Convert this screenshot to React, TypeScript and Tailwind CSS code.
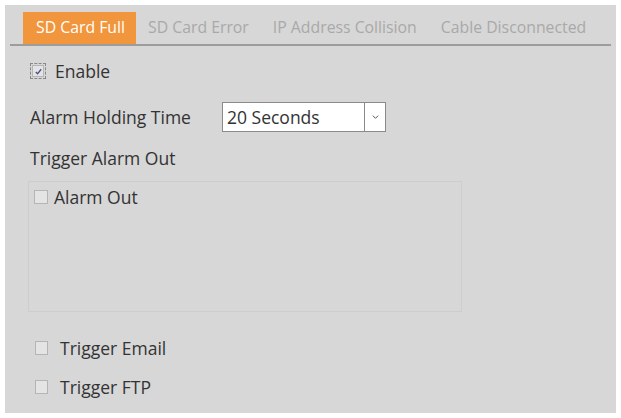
const TABS = ["SD Card Full", "SD Card Error", "IP Address Collision", "Cable Disconnected"];

const Box = ({ checked = false, className = "" }: { checked?: boolean; className?: string }) => (
    <span
        className={`inline-flex items-center justify-center border border-[#b5b5b5] bg-[#e4e4e4] ${className}`}
    >
        {checked && (
            <svg viewBox="0 0 10 10" className="w-[9px] h-[9px]">
                <path d="M2 5.5 L4 7.5 L8 2.5" fill="none" stroke="#4a4f8a" strokeWidth="1.4" />
            </svg>
        )}
    </span>
);

export default function App() {
    return (
        <div className="w-[621px] h-[418px] bg-white p-[5px] font-['Open_Sans',sans-serif] text-[#333]">
            <div className="h-full bg-[#d7d7d7] flex flex-col px-[5px] pt-[7px]">
                <div className="flex items-stretch border-b-2 border-[#9c9c9c] h-[34px] pl-[13px] text-[15.8px] text-[#a9a9a9]">
                    {TABS.map((t, i) => (
                        <div
                            key={t}
                            className={
                                i === 0
                                    ? "flex items-center pl-[13px] pr-[11px] bg-[#f1963c] text-white"
                                    : "flex items-center px-[12px]"
                            }
                        >
                            {t}
                        </div>
                    ))}
                </div>

                <div className="pl-[20px] text-[17.5px]">
                    <label className="flex items-center gap-[9px] mt-[15px] h-[20px]">
                        <span className="inline-flex border border-dashed border-[#888] p-[1px]">
                            <Box checked className="w-[12px] h-[12px]" />
                        </span>
                        Enable
                    </label>

                    <div className="flex items-center mt-[21px] h-[30px]">
                        <span className="w-[192px]">Alarm Holding Time</span>
                        <div className="flex h-[30px] w-[164px] border border-[#8a8a8a] bg-white">
                            <span className="flex-1 flex items-center pl-[4px]">20 Seconds</span>
                            <span className="w-[21px] border-l border-[#8a8a8a] flex items-center justify-center">
                                <svg viewBox="0 0 10 6" className="w-[7px] h-[4px]">
                                    <path d="M1 1 L5 5 L9 1" fill="none" stroke="#555" strokeWidth="1.5" />
                                </svg>
                            </span>
                        </div>
                    </div>

                    <div className="mt-[15px] h-[22px] flex items-center">Trigger Alarm Out</div>

                    <div className="mt-[12px] -ml-[2px] w-[434px] h-[131px] border border-[#cdcdcd] px-[5px] pt-[5px]">
                        <label className="flex items-center gap-[6px] h-[20px]">
                            <Box className="w-[14px] h-[14px]" />
                            Alarm Out
                        </label>
                    </div>

                    <label className="flex items-center gap-[12px] mt-[26px] pl-[5px] h-[20px]">
                        <Box className="w-[13px] h-[14px]" />
                        Trigger Email
                    </label>
                    <label className="flex items-center gap-[12px] mt-[19px] pl-[5px] h-[20px]">
                        <Box className="w-[13px] h-[14px]" />
                        Trigger FTP
                    </label>
                </div>
            </div>
        </div>
    );
}
